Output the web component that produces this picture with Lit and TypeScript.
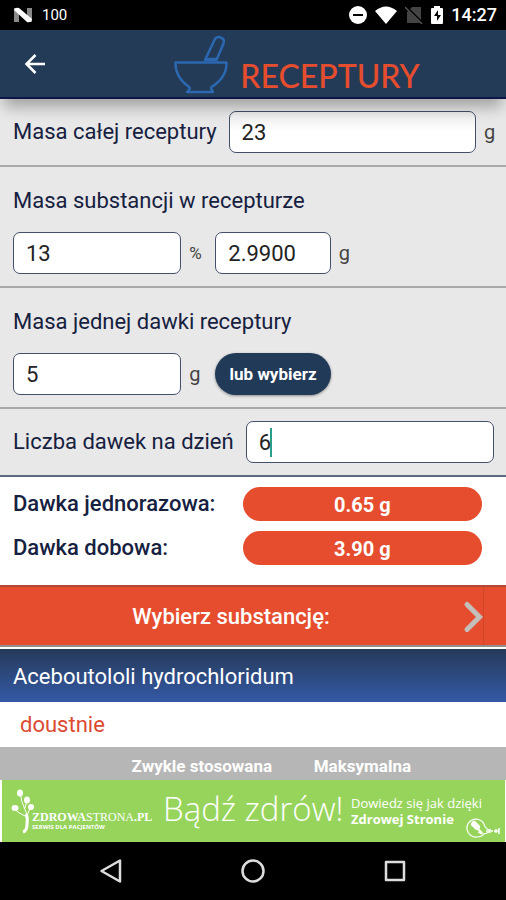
import { LitElement, html, css } from "lit";
import { customElement, state } from "lit/decorators.js";

@customElement("status-bar")
class StatusBar extends LitElement {
  static styles = css`
    :host {
      display: flex;
      align-items: center;
      height: 30px;
      padding: 0 9px 0 13px;
      background: #000;
      color: #fff;
      font-family: Roboto, sans-serif;
    }
    .count {
      margin-left: 9px;
      font: 400 15px/30px Roboto, sans-serif;
    }
    .right {
      display: flex;
      align-items: center;
      gap: 8px;
      margin-left: auto;
    }
    .time {
      font-size: 18px;
      font-weight: 500;
      line-height: 30px;
    }
    svg {
      display: block;
    }
  `;
  render() {
    return html`
      <svg width="20" height="16" viewBox="0 0 20 16" aria-hidden="true">
        <path d="M1 1h5v14H1zM14 1h5v14h-5z" fill="#8a8a8a" />
        <path d="M1 3Q2 0 6 1L19 12Q18 16 14 15z" fill="#fff" />
      </svg>
      <span class="count">100</span>
      <span class="right">
        <svg width="18" height="18" viewBox="0 0 18 18" aria-hidden="true">
          <circle cx="9" cy="9" r="9" fill="#fff" />
          <path d="M4 9h10" stroke="#000" stroke-width="2" />
        </svg>
        <svg width="22" height="18" viewBox="0 0 22 18" aria-hidden="true">
          <path d="M0 5Q11-4 22 5L11 18z" fill="#fff" />
        </svg>
        <svg width="18" height="18" viewBox="0 0 18 18" aria-hidden="true">
          <path d="M7 1h9v16H2V6z" fill="#444" />
          <path d="M1 1l17 17" stroke="#000" stroke-width="3" />
          <path d="M0 1l17 17" stroke="#555" stroke-width="1.5" />
        </svg>
        <svg width="12" height="18" viewBox="0 0 12 18" aria-hidden="true">
          <path d="M3 2V0h6v2h2q1 0 1 1v14q0 1-1 1H1q-1 0-1-1V3q0-1 1-1z" fill="#fff" />
          <path d="M7 4L3 10h3v5l4-6H7z" fill="#000" />
        </svg>
        <span class="time">14:27</span>
      </span>
    `;
  }
}

@customElement("app-header")
class AppHeader extends LitElement {
  static styles = css`
    :host {
      position: relative;
      z-index: 1;
      display: flex;
      align-items: center;
      height: 69px;
      background: #233b57;
      border-bottom: 2px solid #0b1748;
      box-shadow: 0 12px 14px -4px rgba(0, 0, 0, 0.3);
    }
    .back {
      display: flex;
      padding: 0;
      margin-left: 24px;
      border: 0;
      background: none;
    }
    .brand {
      display: flex;
      flex: 1;
      align-items: flex-end;
      justify-content: center;
      gap: 12px;
      padding-left: 42px;
      color: #e64d2e;
      font: 500 32px/36px Lato, sans-serif;
    }
  `;
  render() {
    return html`
      <button class="back" aria-label="Wstecz">
        <svg width="22" height="22" viewBox="0 0 22 22" fill="none" stroke="#fff" stroke-width="2.5">
          <path d="M21 11H3M11.500 2L2.500 11l9 9" />
        </svg>
      </button>
      <div class="brand">
        <svg width="54" height="60" viewBox="0 0 54 60" fill="none" stroke="#2b68b0" stroke-width="2.500" stroke-linejoin="round" aria-hidden="true">
          <path d="M1.500 28.500H52.500Q53 43 37.500 53q-1 2 1.500 5H13q4-3 2-5Q1 43 1.500 28.500z" />
          <path d="M31 26L40.500 6q2-4 6-2.500 4.500 1.500 3 6L42.500 26zM32 25h11" />
        </svg>
        <span>RECEPTURY</span>
      </div>
    `;
  }
}

@customElement("ad-banner")
class AdBanner extends LitElement {
  static styles = css`
    :host {
      display: block;
      padding: 0 1px 0 2px;
      background: #fff;
    }
    .ad {
      position: relative;
      display: flex;
      align-items: center;
      height: 62px;
      padding-left: 9px;
      background: #97d45c;
      color: #fff;
      font-family: "Open Sans", sans-serif;
      text-decoration: none;
      white-space: nowrap;
    }
    .site {
      display: flex;
      flex-direction: column;
      width: 116px;
      margin: 20px 0 0 -2px;
    }
    .name {
      font: 12px/12px "Liberation Serif", serif;
    }
    .sub {
      font: 700 6px/8px "Open Sans", sans-serif;
    }
    .slogan {
      margin: 0 0 4px 15px;
      width: 188px;
      font-size: 33px;
      font-weight: 300;
      line-height: 44px;
    }
    .more {
      display: flex;
      flex-direction: column;
      font-size: 13px;
      line-height: 16px;
    }
    .pill {
      position: absolute;
      right: 4px;
      bottom: 3px;
    }
  `;
  render() {
    return html`
      <a class="ad" href="#">
        <svg width="23" height="46" viewBox="0 0 23 46" fill="none" stroke="#fff" aria-hidden="true">
          <path d="M14 44q4-12 1-20Q10 14 9 4M16 28Q19 20 20 18M14 28Q6 25 2 19M14 20l2-8" />
          <path d="M12 44q4-1 4-8 1-6-1-10" stroke-width="3" />
          <g fill="#fff" stroke="none">
            <ellipse cx="9" cy="5" rx="3" ry="3.500" />
            <ellipse cx="16" cy="12" rx="3" ry="3.500" />
            <ellipse cx="4" cy="20" rx="3.500" ry="3" />
            <ellipse cx="20" cy="19" rx="3" ry="3" />
          </g>
        </svg>
        <span class="site">
          <span class="name"><b>ZDROWA</b>STRONA<b>.PL</b></span>
          <span class="sub">SERWIS DLA PACJENTÓW</span>
        </span>
        <span class="slogan">Bądź zdrów!</span>
        <span class="more"><span>Dowiedz się jak dzięki</span><b>Zdrowej Stronie</b></span>
        <svg class="pill" width="35" height="22" viewBox="0 0 35 22" fill="none" stroke="#fff" aria-hidden="true">
          <path d="M19 16Q16 20 11 20A9 9 0 1 1 18 7q1 5 6 6M12 15q5 4 11 0" stroke-width="1.200" />
          <path d="M8 7l3 3" stroke-width="6" stroke-linecap="round" />
          <path d="M10 10l6 6" stroke-width="2" />
          <path d="M20 14h4m1 0h2m1 0h5M24 12v4M30 12v4M33 11v6" stroke-width="1.500" />
        </svg>
      </a>
    `;
  }
}

@customElement("nav-bar")
class NavBar extends LitElement {
  static styles = css`
    :host {
      display: grid;
      grid-template-columns: repeat(3, 1fr);
      width: 84%;
      height: 58px;
      margin: 0 auto;
    }
    button {
      display: flex;
      align-items: center;
      justify-content: center;
      padding: 0;
      border: 0;
      background: none;
    }
  `;
  render() {
    return html`
      <button aria-label="Wstecz">
        <svg width="24" height="24" viewBox="0 0 24 24" fill="none" stroke="#ddd" stroke-width="2.500" stroke-linejoin="round">
          <path d="M21 1.500v21L2.500 12z" />
        </svg>
      </button>
      <button aria-label="Ekran główny">
        <svg width="24" height="24" viewBox="0 0 24 24" fill="none" stroke="#ddd" stroke-width="2.500">
          <circle cx="12" cy="12" r="10.500" />
        </svg>
      </button>
      <button aria-label="Ostatnie">
        <svg width="24" height="24" viewBox="0 0 24 24" fill="none" stroke="#ddd" stroke-width="2.500" stroke-linejoin="round">
          <path d="M3 3h18v18H3z" />
        </svg>
      </button>
    `;
  }
}

@customElement("app-root")
class AppRoot extends LitElement {
  static styles = css`
    :host {
      display: flex;
      flex-direction: column;
      min-height: 100vh;
      background: #000;
      color: #16203f;
      font: 400 22px/28px Roboto, sans-serif;
    }
    * {
      box-sizing: border-box;
    }
    main {
      flex: 1;
      background: #fff;
    }
    .section {
      padding: 12px 12px 12px 13px;
      background: #e8e8e8;
      border-bottom: 2px solid #a9a9a9;
    }
    .last {
      border-bottom-color: #5b6b7c;
    }
    .row {
      display: flex;
      align-items: center;
    }
    .title {
      display: block;
      margin: 8px 0 17px;
    }
    .gap {
      gap: 12px;
    }
    .field {
      position: relative;
      flex: 1;
      min-width: 0;
    }
    input {
      display: block;
      width: 100%;
      height: 42px;
      padding: 0 12px;
      border: 1px solid #44506a;
      border-radius: 7px;
      background: #fff;
      color: #222;
      font: 400 22px/28px Roboto, sans-serif;
    }
    .shaded {
      background: linear-gradient(#ececec, #fff 50%);
    }
    .caret {
      position: absolute;
      top: 7px;
      left: 24px;
      width: 2px;
      height: 29px;
      background: #2a9d8b;
    }
    .dose {
      flex: 0 0 35%;
    }
    .mass {
      flex: 0 0 24%;
    }
    .unit {
      width: 34px;
      padding-left: 8px;
      color: #444;
      font-size: 20px;
    }
    .percent {
      font-size: 17px;
    }
    .end {
      width: 18px;
    }
    .choose {
      flex: 0 0 24%;
      height: 42px;
      padding: 0;
      border: 0;
      border-radius: 21px;
      background: #213a58;
      box-shadow: 0 1px 3px rgba(0, 0, 0, 0.4);
      color: #fff;
      font: 700 17px/24px Roboto, sans-serif;
    }
    .results {
      display: grid;
      grid-template-columns: 1fr 51%;
      row-gap: 10px;
      align-items: center;
      height: 108px;
      padding: 10px 24px 20px 13px;
      font-weight: 500;
    }
    output {
      height: 34px;
      border-radius: 17px;
      background: #e64d2e;
      color: #fff;
      font-size: 20px;
      font-weight: 700;
      line-height: 36px;
      text-align: center;
    }
    .select {
      display: flex;
      align-items: center;
      width: 100%;
      height: 62px;
      padding: 2px 22px 0 0;
      border: 0;
      border-top: 2px solid #b04a35;
      border-bottom: 2px solid #93908c;
      background: linear-gradient(#cf4529, #cf4529) right 22px top / 1px 100% no-repeat #e64d2e;
      color: #fff;
      font: 500 22px/28px Roboto, sans-serif;
    }
    .select span {
      flex: 1;
      text-align: center;
    }
    .substance {
      margin: 0;
      padding: 14px 13px 11px;
      border-top: 2px solid #fff;
      background: linear-gradient(#263a5a, #3459a5) padding-box;
      color: #fff;
      font: 400 22px/28px Roboto, sans-serif;
    }
    .route {
      margin: 0;
      padding: 9px 20px 8px;
      color: #dc4a32;
    }
    table {
      width: 100%;
      border-collapse: collapse;
      background: #b6b6b6;
      color: #fff;
      font-size: 17px;
      line-height: 24px;
      table-layout: fixed;
    }
    th,
    td {
      padding: 7px 0 2px;
      font-weight: 700;
      text-align: left;
    }
    .c1 {
      width: 26%;
    }
    .c2 {
      width: 36%;
    }
  `;

  @state() mass = "23";
  @state() percent = "13";
  @state() substance = "2.9900";
  @state() dose = "5";
  @state() daily = "6";

  render() {
    return html`
      <status-bar></status-bar>
      <app-header></app-header>
      <main>
        <div class="section row">
          <span class="row gap field">
            <label for="mass">Masa całej receptury</label>
            <span class="field">
              <input class="shaded" id="mass" .value=${this.mass} />
            </span>
          </span>
          <span class="unit end">g</span>
        </div>
        <div class="section">
          <label class="title" for="percent">Masa substancji w recepturze</label>
          <div class="row">
            <span class="dose"><input id="percent" .value=${this.percent} /></span>
            <span class="unit percent">%</span>
            <span class="mass"><input aria-label="Masa substancji w gramach" .value=${this.substance} /></span>
            <span class="unit">g</span>
          </div>
        </div>
        <div class="section">
          <label class="title" for="dose">Masa jednej dawki receptury</label>
          <div class="row">
            <span class="dose"><input id="dose" .value=${this.dose} /></span>
            <span class="unit">g</span>
            <button class="choose">lub wybierz</button>
          </div>
        </div>
        <div class="section last row gap">
          <label for="daily">Liczba dawek na dzień</label>
          <span class="field">
            <input id="daily" .value=${this.daily} />
            <span class="caret"></span>
          </span>
        </div>
        <div class="results">
          <label for="single">Dawka jednorazowa:</label>
          <output id="single">0.65 g</output>
          <label for="total">Dawka dobowa:</label>
          <output id="total">3.90 g</output>
        </div>
        <button class="select">
          <span>Wybierz substancję:</span>
          <svg width="22" height="34" viewBox="0 0 22 34" fill="none" stroke="#c4bfba" stroke-width="5" stroke-linecap="round" aria-hidden="true">
            <path d="M5 4.500L17.500 17L5 29.500" />
          </svg>
        </button>
        <h2 class="substance">Aceboutololi hydrochloridum</h2>
        <p class="route">doustnie</p>
        <table>
          <thead>
            <tr>
              <td class="c1"></td>
              <th class="c2" scope="col">Zwykle stosowana</th>
              <th scope="col">Maksymalna</th>
            </tr>
          </thead>
        </table>
      </main>
      <ad-banner></ad-banner>
      <nav-bar></nav-bar>
    `;
  }
}
